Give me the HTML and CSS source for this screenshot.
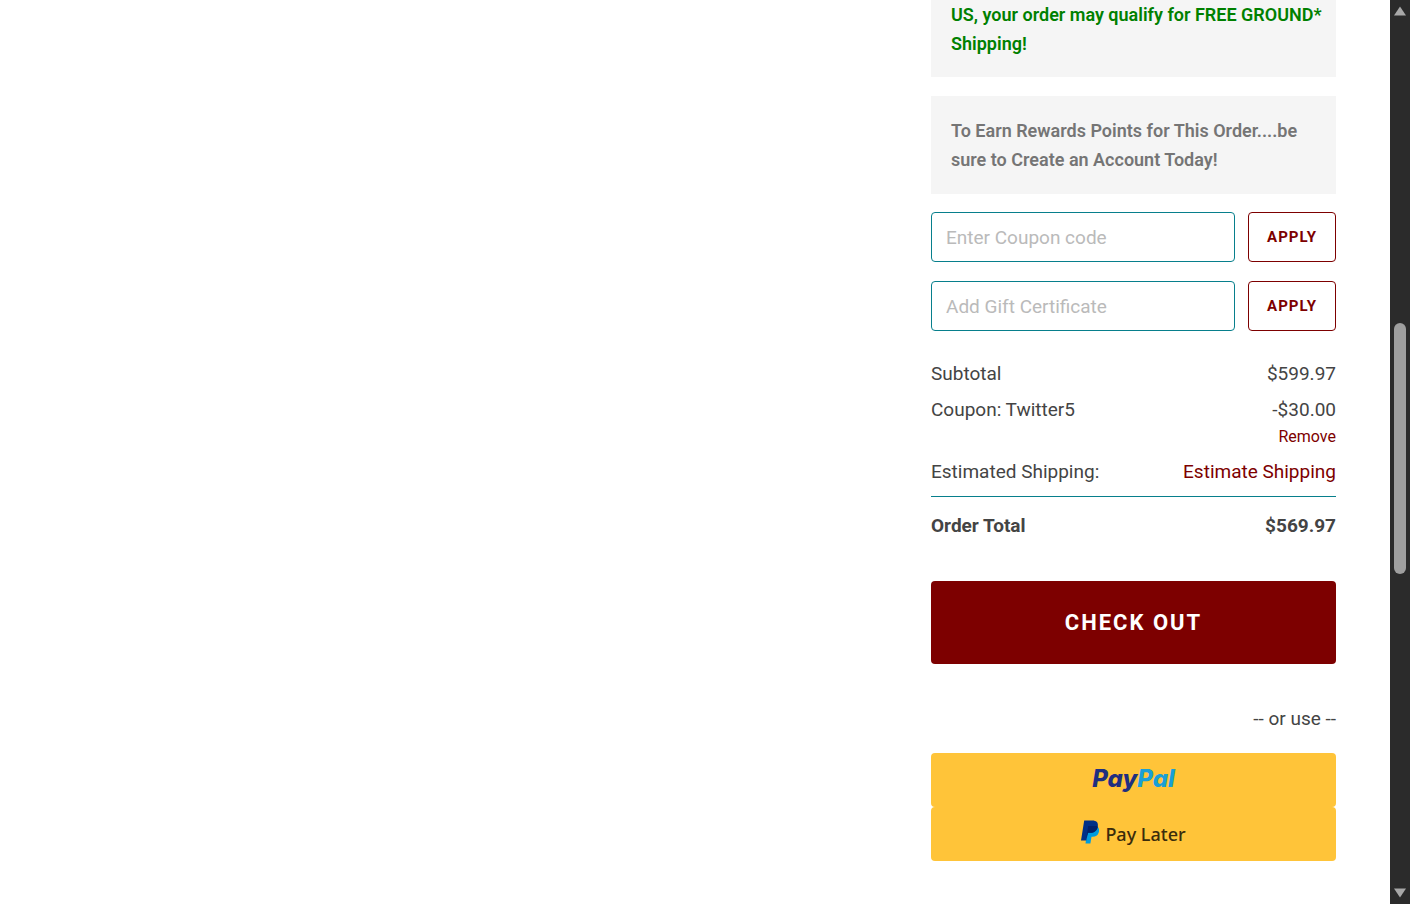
FILE: index.html
```html
<!DOCTYPE html>
<html lang="en">
<head>
    <meta charset="UTF-8">
    <meta name="viewport" content="width=device-width, initial-scale=1.0">
    <title>Shopping Cart</title>
    <link rel="stylesheet" href="styles.css">
</head>
<body>
    <main class="page">
        <section class="cart-summary" aria-label="Order summary">
            <div class="notice notice-shipping">US, your order may qualify for FREE GROUND* Shipping!</div>
            <div class="notice">To Earn Rewards Points for This Order....be sure to Create an Account Today!</div>

            <form class="code-form">
                <input type="text" name="coupon" placeholder="Enter Coupon code" aria-label="Coupon code">
                <button type="button" class="apply">Apply</button>
            </form>
            <form class="code-form">
                <input type="text" name="certificate" placeholder="Add Gift Certificate" aria-label="Gift certificate">
                <button type="button" class="apply">Apply</button>
            </form>

            <dl class="totals">
                <div class="total-row">
                    <dt>Subtotal</dt>
                    <dd>$599.97</dd>
                </div>
                <div class="total-row">
                    <dt>Coupon: Twitter5</dt>
                    <dd>-$30.00 <a class="remove" href="#">Remove</a></dd>
                </div>
                <div class="total-row">
                    <dt>Estimated Shipping:</dt>
                    <dd><a href="#">Estimate Shipping</a></dd>
                </div>
                <div class="total-row grand-total">
                    <dt>Order Total</dt>
                    <dd>$569.97</dd>
                </div>
            </dl>

            <button type="button" class="checkout">Check out</button>
            <p class="or-use">-- or use --</p>

            <div class="wallets">
                <button type="button" class="wallet wallet-paypal"><span class="pay">Pay</span><span class="pal">Pal</span></button>
                <button type="button" class="wallet wallet-later">
                    <svg width="18" height="24" viewBox="0 0 18 24" aria-hidden="true">
                        <path fill="#009cde" d="M7 6h8.500c2.500 1.500 3 4 2.200 6.500-.9 3-3 4.300-6 4.300h-1.200L9.400 23.500H4.500z"/>
                        <path fill="#003087" d="M3.200 0.500h8.100c4 0 6.300 2 5.500 6-.8 4.100-3.600 6.300-7.500 6.300H7L5.300 20.500H0z"/>
                        <path fill="#012169" d="M7.200 6h8.300l1.300.7c-.8 4-3.600 6.100-7.500 6.100H7l-1.500 4.700z"/>
                    </svg>
                    <span>Pay Later</span>
                </button>
            </div>
        </section>
    </main>

    <div class="scrollbar" aria-hidden="true">
        <svg width="12" height="10" viewBox="0 0 12 10"><path fill="#a8a8a8" d="M6 0.500 12 9.500H0z"/></svg>
        <div class="track">
            <div class="thumb"></div>
        </div>
        <svg width="12" height="10" viewBox="0 0 12 10"><path fill="#a8a8a8" d="M0 0.500h12L6 9.500z"/></svg>
    </div>
</body>
</html>
```
FILE: styles.css
```css
* { box-sizing: border-box; }

body {
    margin: 0;
    display: flex;
    min-height: 100vh;
    background-color: #fff;
    color: #444;
    font-family: Roboto, "Liberation Sans", sans-serif;
    font-size: 19px;
    line-height: 28px;
}
button, input { font-family: inherit; }
button { cursor: pointer; }
a { color: #7d0000; text-decoration: none; }

.page {
    flex: 1;
    display: flex;
    justify-content: flex-end;
    padding: 0 54px;
}
.cart-summary { width: 405px; }

/* Grey message boxes */
.notice {
    margin-bottom: 18px;
    padding: 20px 10px 20px 20px;
    background-color: #f5f5f5;
    color: #757575;
    font-size: 18px;
    font-weight: 600;
    line-height: 29px;
}
.notice-shipping {
    margin-bottom: 19px;
    padding-top: 0;
    padding-bottom: 19px;
    color: #008000;
}

/* Coupon and gift certificate */
.code-form {
    display: flex;
    gap: 13px;
    margin-bottom: 19px;
}
.code-form input {
    flex: 1;
    min-width: 0;
    height: 50px;
    padding: 0 14px;
    border: 1px solid #077f8c;
    border-radius: 4px;
    font-size: 19px;
    color: #444;
}
.code-form input::placeholder { color: #bababa; }
.apply {
    width: 88px;
    padding: 0;
    border: 1px solid #7d0000;
    border-radius: 4px;
    background-color: #fff;
    color: #7d0000;
    font-size: 15px;
    font-weight: 700;
    letter-spacing: 1px;
    text-transform: uppercase;
}

/* Totals */
.totals { margin: 29px 0 0; }
.total-row {
    display: flex;
    justify-content: space-between;
    margin-bottom: 8px;
}
.total-row dd { margin: 0; text-align: right; }
.remove {
    display: block;
    font-size: 16px;
    line-height: 26px;
}
.grand-total {
    margin-top: 10px;
    padding-top: 15px;
    border-top: 1px solid #077f8c;
    font-weight: 700;
}
.total-row:nth-child(3) { margin-bottom: 0; }

.checkout {
    display: block;
    width: 100%;
    height: 83px;
    margin-top: 41px;
    border: 0;
    border-radius: 4px;
    background-color: #7d0000;
    color: #fff;
    font-size: 22px;
    font-weight: 700;
    letter-spacing: 2px;
    text-transform: uppercase;
}
.or-use { margin: 41px 0 20px; text-align: right; }

/* PayPal buttons */
.wallet {
    display: flex;
    align-items: center;
    justify-content: center;
    width: 100%;
    height: 54px;
    border: 0;
    border-radius: 4px;
    background-color: #ffc439;
}
.wallet-paypal {
    padding-bottom: 4px;
    font-family: Inter, sans-serif;
    font-size: 24px;
    font-style: italic;
    font-weight: 800;
}
.pay { color: #1f2f80; }
.pal { color: #1a9fd6; }
.wallet-later {
    gap: 6px;
    color: #3a2c0c;
    font-family: "Noto Sans", sans-serif;
    font-size: 18px;
    font-weight: 500;
}
.wallet-later svg { margin-bottom: 4px; }

/* Window scrollbar */
.scrollbar {
    display: flex;
    flex-direction: column;
    align-items: center;
    justify-content: space-between;
    width: 20px;
    padding: 6px 0;
    background-color: #2b2b2b;
}
.track {
    flex: 1;
    display: grid;
    grid-template-rows: 307fr 251fr 314fr;
}
.thumb {
    grid-row: 2;
    width: 12px;
    border-radius: 6px;
    background-color: #9f9f9f;
}
```
